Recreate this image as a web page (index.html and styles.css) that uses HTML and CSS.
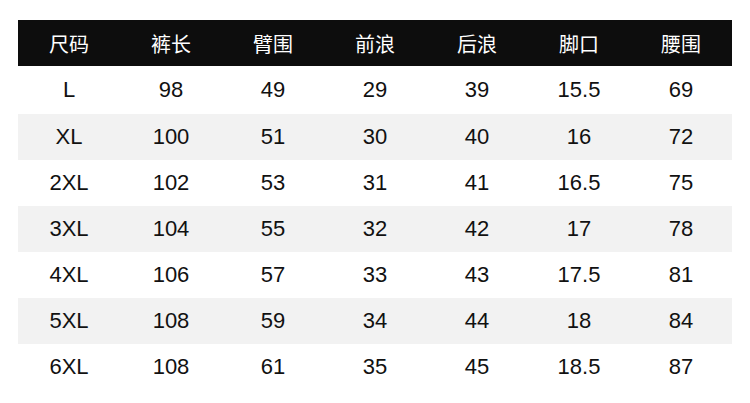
FILE: index.html
```html
<!DOCTYPE html>
<html>
<head>
<meta charset="utf-8">
<link rel="stylesheet" href="styles.css">
</head>
<body>
<div class="table">
  <div class="row head"><span>尺码</span><span>裤长</span><span>臂围</span><span>前浪</span><span>后浪</span><span>脚口</span><span>腰围</span></div>
  <div class="row first"><span>L</span><span>98</span><span>49</span><span>29</span><span>39</span><span>15.5</span><span>69</span></div>
  <div class="row alt"><span>XL</span><span>100</span><span>51</span><span>30</span><span>40</span><span>16</span><span>72</span></div>
  <div class="row"><span>2XL</span><span>102</span><span>53</span><span>31</span><span>41</span><span>16.5</span><span>75</span></div>
  <div class="row alt"><span>3XL</span><span>104</span><span>55</span><span>32</span><span>42</span><span>17</span><span>78</span></div>
  <div class="row"><span>4XL</span><span>106</span><span>57</span><span>33</span><span>43</span><span>17.5</span><span>81</span></div>
  <div class="row alt"><span>5XL</span><span>108</span><span>59</span><span>34</span><span>44</span><span>18</span><span>84</span></div>
  <div class="row"><span>6XL</span><span>108</span><span>61</span><span>35</span><span>45</span><span>18.5</span><span>87</span></div>
</div>
</body>
</html>
```
FILE: styles.css
```css
html, body {
  margin: 0;
  padding: 0;
  background: #ffffff;
}
body {
  padding: 20px 18px 0 18px;
  font-family: "Liberation Sans", Arial, "Noto Sans CJK SC", sans-serif;
  color: #111111;
}
.table {
  width: 714px;
}
.row {
  display: grid;
  grid-template-columns: repeat(7, 102px);
  height: 46.1px;
  align-items: center;
  font-size: 22px;
}
.row span {
  text-align: center;
}
.row.head {
  height: 46px;
  background: #0d0d0d;
  color: #ffffff;
  font-family: "Noto Sans CJK SC", sans-serif;
  font-size: 20px;
}
.row.first {
  height: 47.5px;
}
.row.alt {
  background: #f2f2f2;
}
```
